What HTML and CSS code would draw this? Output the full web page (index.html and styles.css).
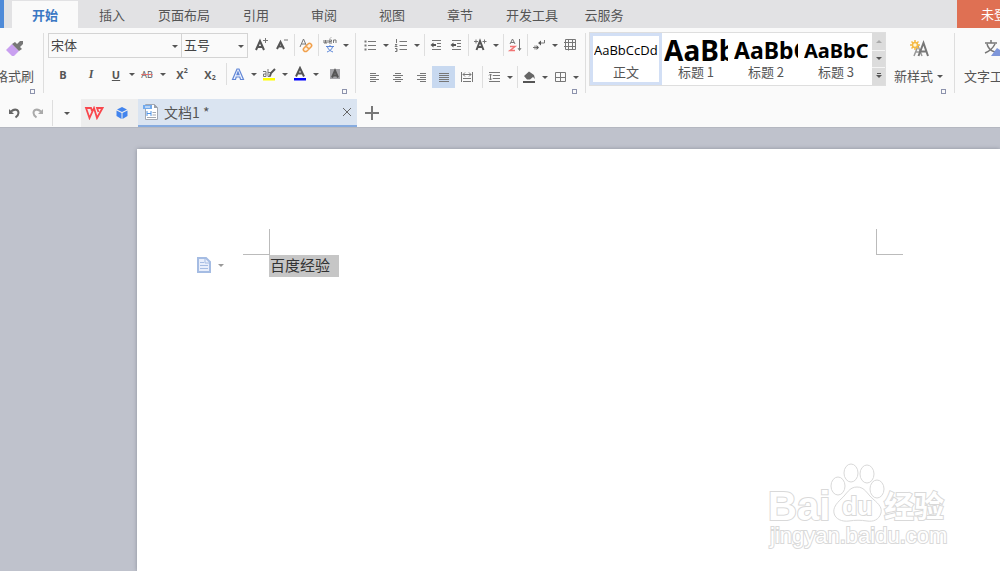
FILE: index.html
```html
<!DOCTYPE html>
<html lang="zh-CN">
<head>
<meta charset="utf-8">
<title>文档1</title>
<link rel="stylesheet" href="styles.css">
</head>
<body>
<div class="app">
  <header class="menubar">
    <span class="app-edge"></span>
    <nav class="menu">
      <button class="menu-tab active">开始</button>
      <button class="menu-tab">插入</button>
      <button class="menu-tab">页面布局</button>
      <button class="menu-tab">引用</button>
      <button class="menu-tab">审阅</button>
      <button class="menu-tab">视图</button>
      <button class="menu-tab">章节</button>
      <button class="menu-tab">开发工具</button>
      <button class="menu-tab">云服务</button>
    </nav>
    <button class="login">未登录</button>
  </header>

  <section class="ribbon">
    <div class="group painter">
      <button class="big-tool">
        <svg width="20" height="20" viewBox="0 0 20 20"><path d="M1 11 7 5l7 7-5 5H7z" fill="#c9a0f0"/><path d="m7 5 3-2 2 2 3-3 3 0 0 3-3 3 2 2-3 2z" fill="#777"/></svg>
        <span>格式刷</span>
      </button>
      <button class="launcher" aria-label="剪贴板选项"></button>
    </div>

    <div class="group font-group">
      <div class="row">
        <label class="combo combo-font"><select aria-label="字体"><option>宋体</option></select></label>
        <label class="combo combo-size"><select aria-label="字号"><option>五号</option></select></label>
        <button class="tool first-tool" aria-label="增大字号"><svg class="ico" viewBox="0 0 16 16"><path d="M3 13 7 4l4 9M4.500 10h5" class="bold"/><path d="M10 3.500h5M12.500 1v5" class="line"/></svg></button>
        <button class="tool gap-tool" aria-label="减小字号"><svg class="ico" viewBox="0 0 16 16"><path d="M3 12 6.500 5l3.500 7M4.500 9.500h4" class="bold"/><path d="M10 3h4" class="line"/></svg></button>
        <i class="sep"></i>
        <button class="tool" aria-label="清除格式"><svg class="ico" viewBox="0 0 16 16"><path d="M2 10 5.500 2 9 10M3.500 7h4" class="line"/><path d="m6 11 4-4a2 2 0 0 1 3 3l-4 4a2 2 0 0 1-3-3zM8 9l3 3" fill="#fff1df" stroke="#f0a04c" stroke-width="1.500"/></svg></button>
        <i class="sep"></i>
        <button class="tool" aria-label="拼音指南"><svg class="ico" viewBox="0 0 16 16"><path d="M2 3v3h3V3M3.500 3v3M7 4.500h2.500V3H7v3h3M11.500 6V3h2.500v3M8 1.500l1-1" class="line"/><path d="M4 9.500h8M8 8v1M5.500 10c1 3 3 4 5.500 5M10.500 10c-1 3-3 4-5.500 5" stroke="#5b86d8" fill="none"/></svg></button>
        <button class="caret" aria-label="更多拼音选项"></button>
      </div>
      <div class="row row-lower">
        <button class="tool w28 t-bold" aria-label="加粗">B</button>
        <button class="tool w28 t-italic" aria-label="倾斜">I</button>
        <button class="tool gap-tool t-under" aria-label="下划线">U</button>
        <button class="caret" aria-label="下划线样式"></button>
        <button class="tool t-strike" aria-label="删除线">AB</button>
        <button class="caret" aria-label="删除线样式"></button>
        <button class="tool w28 t-script" aria-label="上标">X<sup>2</sup></button>
        <button class="tool w28 t-script" aria-label="下标">X<sub>2</sub></button>
        <i class="sep"></i>
        <button class="tool" aria-label="文字效果"><svg class="ico" viewBox="0 0 16 16"><path d="M2.500 13.500 7 3h2l4.500 10.500h-3L9.800 11H6.200l-.700 2.500zM7 8.700h2L8 6z" fill="#eef3ff" stroke="#6287d6" stroke-width="1.200"/></svg></button>
        <button class="caret" aria-label="文字效果选项"></button>
        <button class="tool" aria-label="突出显示"><svg class="ico" viewBox="0 0 16 16"><path d="M2 5.500h3v5H2.500V8H5M7 3v7.500h2.500v-4H7" class="line"/><path d="m9 10 1-3 4-4" class="bold"/><path d="M2 12h12v2.500H2z" fill="#ff0"/></svg></button>
        <button class="caret" aria-label="突出显示颜色"></button>
        <button class="tool" aria-label="字体颜色"><svg class="ico" viewBox="0 0 16 16"><path d="M4 10.500 8 2l4 8.500M5.500 7.500h5" class="bold"/><path d="M2 12h12v2.500H2z" fill="#00f"/></svg></button>
        <button class="caret" aria-label="选择字体颜色"></button>
        <button class="tool w28" aria-label="字符底纹"><svg class="ico" viewBox="0 0 16 16"><path d="M3 3h10v10H3z" fill="#a4a4a8"/><path d="m5 11.500 3-7 3 7M6 9.500h4" class="bold"/></svg></button>
      </div>
      <button class="launcher" aria-label="字体设置"></button>
    </div>

    <div class="group para-group">
      <div class="row">
        <button class="tool" aria-label="项目符号"><svg class="ico" viewBox="0 0 16 16"><path d="M6 4.500h8M6 8.500h8M6 12.500h8" class="line"/><path d="M2.500 3.500h2v2h-2zM2.500 7.500h2v2h-2zM2.500 11.500h2v2h-2z" fill="#777"/></svg></button>
        <button class="caret" aria-label="项目符号样式"></button>
        <button class="tool" aria-label="编号"><svg class="ico" viewBox="0 0 16 16"><path d="M6.500 4.500H14M6.500 8.500H14M6.500 12.500H14M3.500 2v4M2 7.500h2l-2 2h2.500M2 11.500h2v3H2M3 13h1" class="line"/></svg></button>
        <button class="caret" aria-label="编号样式"></button>
        <i class="sep"></i>
        <button class="tool" aria-label="减少缩进"><svg class="ico" viewBox="0 0 16 16"><path d="M4 3.500h9M9 6.500h4M9 9.500h4M4 12.500h9" class="line"/><path d="M8 8H4" class="bold"/><path d="m2.500 8 3-2.500v5z" fill="#555"/></svg></button>
        <button class="tool" aria-label="增加缩进"><svg class="ico" viewBox="0 0 16 16"><path d="M4 3.500h9M9 6.500h4M9 9.500h4M4 12.500h9" class="line"/><path d="M5 8h3" class="bold"/><path d="m2.500 8 3-2.500v5z" fill="#555"/></svg></button>
        <i class="sep"></i>
        <button class="tool" aria-label="中文版式"><svg class="ico" viewBox="0 0 16 16"><path d="m4.500 13 3.500-9 3.500 9M6 10h4" class="bold"/><path d="M2 4.500h4M4 2.500v4M10.500 4.500h4M12.500 2.500v4" class="line"/></svg></button>
        <button class="caret" aria-label="中文版式选项"></button>
        <i class="sep"></i>
        <button class="tool" aria-label="排序"><svg class="ico" viewBox="0 0 16 16"><path d="m3 7 2.500-5L8 7M4 5.500h3M12.500 2v11M11 11l1.500 2.500L14 11" class="line"/><path d="M3 9.500h5l-5 4h5" fill="none" stroke="#f27474" stroke-width="1.500"/></svg></button>
        <i class="sep"></i>
        <button class="tool" aria-label="显示段落标记"><svg class="ico" viewBox="0 0 16 16"><path d="M13.500 3v3H9M7 10.500H2M4 8.500v4" class="line"/><path d="m7 6 3-2.500v5zM8 10.500 5.500 8v5z" fill="#555"/></svg></button>
        <button class="caret" aria-label="段落标记选项"></button>
        <button class="tool" aria-label="插入表格"><svg class="ico" viewBox="0 0 16 16"><path d="M3.500 2.500h10v10h-10zM2 5.500h11.500M2 9.500h11.500M6.500 2.500v11M10.500 2.500v10" class="line"/></svg></button>
      </div>
      <div class="row row-align">
        <button class="tool w23" aria-label="左对齐"><svg class="ico" viewBox="0 0 16 16"><path d="M3 4.500h6M3 6.500h9M3 8.500h6M3 10.500h9M3 12.500h6" class="line"/></svg></button>
        <button class="tool w23" aria-label="居中"><svg class="ico" viewBox="0 0 16 16"><path d="M5 4.500h6M3 6.500h10M5 8.500h6M3 10.500h10M5 12.500h6" class="line"/></svg></button>
        <button class="tool w23" aria-label="右对齐"><svg class="ico" viewBox="0 0 16 16"><path d="M7 4.500h6M4 6.500h9M7 8.500h6M4 10.500h9M7 12.500h6" class="line"/></svg></button>
        <button class="tool w23 pressed" aria-label="两端对齐" aria-pressed="true"><svg class="ico" viewBox="0 0 16 16"><path d="M3 4.500h10M3 6.500h10M3 8.500h10M3 10.500h10M3 12.500h10" class="line"/></svg></button>
        <button class="tool w23" aria-label="分散对齐"><svg class="ico" viewBox="0 0 16 16"><path d="M2.500 3v10M13.500 3v10M4 5.500h8M4 9.500h8M4 12.500h8M6 3.500l-2 2 2 2M10 3.500l2 2-2 2" class="line"/></svg></button>
        <i class="sep sep-align"></i>
        <button class="tool" aria-label="行距"><svg class="ico" viewBox="0 0 16 16"><path d="M3 3.500h11M7 6.500h7M7 9.500h7M3 12.500h11M4.500 5v6M3 6.500 4.500 5 6 6.500M3 9.500 4.500 11 6 9.500" class="line"/></svg></button>
        <button class="caret" aria-label="行距选项"></button>
        <i class="sep"></i>
        <button class="tool" aria-label="底纹"><svg class="ico" viewBox="0 0 16 16"><path d="m3 7 5-4.500L13 6l1 4-2-2-3 2.500H6z" fill="#666"/><path d="M2 12h12v2H2z" fill="#555"/></svg></button>
        <button class="caret" aria-label="底纹颜色"></button>
        <button class="tool" aria-label="边框"><svg class="ico" viewBox="0 0 16 16"><path d="M3.500 3.500h10v9h-10zM8.500 3.500v9M3.500 8.500h10" class="line"/></svg></button>
        <button class="caret" aria-label="边框样式"></button>
      </div>
      <button class="launcher" aria-label="段落设置"></button>
    </div>

    <div class="group style-group">
      <div class="gallery">
        <button class="style selected"><span class="sample s-body">AaBbCcDd</span><span>正文</span></button>
        <button class="style"><span class="sample s-h1">AaBb</span><span>标题 1</span></button>
        <button class="style"><span class="sample s-h2">AaBbC</span><span>标题 2</span></button>
        <button class="style"><span class="sample s-h3">AaBbC</span><span>标题 3</span></button>
        <div class="scroller">
          <button class="up" aria-label="向上"></button>
          <button class="down" aria-label="向下"></button>
          <button class="down more" aria-label="更多样式"></button>
        </div>
      </div>
      <button class="big-tool new-style">
        <svg width="20" height="20" viewBox="0 0 20 20"><path d="m5 17 4-10 4 10M6.500 13h5" fill="none" stroke="#999" stroke-width="1.500"/><path d="m9.500 17 5-13 4.500 13M11 12.500h6" fill="none" stroke="#777" stroke-width="2"/><circle cx="6" cy="6" r="2.500" fill="#fff8dc" stroke="#f5b942" stroke-width="1.500"/><path d="M6 1v2M6 9v2M1 6h2M9 6h2M2.500 2.500 4 4M8 8l1.500 1.500M9.500 2.500 8 4M4 8 2.500 9.500" stroke="#f5b942" stroke-width="1.500"/></svg>
        <span>新样式<b class="mini-caret"></b></span>
      </button>
      <button class="launcher" aria-label="样式设置"></button>
    </div>

    <div class="group text-tools">
      <button class="big-tool">
        <svg width="20" height="20" viewBox="0 0 20 20"><path d="M5 4h12M11 1v3M7 5c1 4 4 7 8 8M15 5c-2 4-5 7-10 9" fill="none" stroke="#777" stroke-width="1.500"/><path d="m11 17 6-8 3 2v6z" fill="#7e96da"/></svg>
        <span>文字工具</span>
      </button>
    </div>
  </section>

  <section class="docbar">
    <div class="quick">
      <button class="quick-btn" aria-label="撤销"><svg width="14" height="14" viewBox="0 0 14 14"><path d="M4 5.500C8 2 11.500 4 11.500 7c0 2-1 3-3 4.500" fill="none" stroke="#666" stroke-width="2"/><path d="M2 3v5h5z" fill="#666"/></svg></button>
      <button class="quick-btn" aria-label="恢复"><svg width="14" height="14" viewBox="0 0 14 14"><path d="M10 5.500C6 2 2.500 4 2.500 7c0 2 1 3 3 4.500" fill="none" stroke="#aaa" stroke-width="2"/><path d="M12 3v5H7z" fill="#aaa"/></svg></button>
      <i class="sep quick-sep"></i>
      <button class="quick-btn quick-more" aria-label="自定义快速访问工具栏"></button>
    </div>
    <div class="apps">
      <button class="app-btn" aria-label="WPS 首页"><svg width="20" height="14" viewBox="0 0 20 14"><path d="M8 5 7 2H2l3.500 10L10 2l3 10 5.500-10H13l1.500 4" fill="none" stroke="#f9474d" stroke-width="1.800"/></svg></button>
      <button class="app-btn" aria-label="稻壳"><svg width="14" height="14" viewBox="0 0 14 14"><path d="m7 1 5 2.500L7 6 2 3.500zM1.500 4.500l5 2.500v6l-5-3zM12.500 4.500 7.500 7v6l5-3z" fill="#4284ee"/></svg></button>
    </div>
    <div class="doc-tab">
      <svg width="16" height="18" viewBox="0 0 16 18"><path d="M2.500 1.500h9l3 3v12h-12z" fill="#fff" stroke="#a3a8b2"/><path d="M11 1v4h4z" fill="#9aa0aa"/><path d="M0 2h9v4H0z" fill="#72aaed"/><path d="M2 4h5" stroke="#fff"/><path d="M4 8v5M4 10.500h4M8 8v5" stroke="#4f92e4" fill="none"/><path d="M9.500 9.500H13M9.500 12H13M4 14.500h9" stroke="#a3a8b2"/></svg>
      <span class="doc-name">文档1 *</span>
      <button class="close" aria-label="关闭"><svg width="10" height="10" viewBox="0 0 10 10"><path d="m1 1 8 8M9 1 1 9" stroke="#666"/></svg></button>
    </div>
    <button class="add" aria-label="新建文档"><svg width="14" height="14" viewBox="0 0 14 14"><path d="M7 0v14M0 7h14" stroke="#777" stroke-width="2"/></svg></button>
  </section>

  <main class="canvas">
    <article class="page">
      <div class="margins"><i class="mark mark-left"></i><i class="mark mark-right"></i></div>
      <div class="line-row">
        <button class="para-btn" aria-label="段落布局"><svg width="14" height="16" viewBox="0 0 14 16"><path d="M1 1h8l4 4v10H1z" fill="#e8eefb" stroke="#a5bce3" stroke-width="2"/><path d="M8 1v5h5M3 8.500h8M3 11.500h8M3 5.500h4" stroke="#a5bce3" fill="none"/></svg><b class="mini-caret"></b></button>
        <p class="text"><span class="selection">百度经验</span></p>
      </div>
    </article>
    <svg class="watermark" width="184" height="90" viewBox="0 0 184 90">
      <g class="wm">
        <ellipse cx="72" cy="27" rx="7" ry="9"/><ellipse cx="85" cy="14" rx="7" ry="9"/><ellipse cx="101" cy="15" rx="7" ry="9"/><ellipse cx="111" cy="30" rx="7" ry="9"/>
        <path d="M91 28c8 0 10 7 16 12 7 6 9 9 8 14-2 7-8 9-14 8-6-1-12-1-18 0-7 1-14-2-15-8-1-5 2-9 7-14 6-5 8-12 16-12z"/>
        <text x="2" y="61" class="wm-logo">Bai</text><text x="76" y="56" class="wm-du">du</text><text x="118" y="58" class="wm-cn">经验</text>
        <text x="4" y="84" class="wm-url">jingyan.baidu.com</text>
      </g>
    </svg>
  </main>
</div>
</body>
</html>
```
FILE: styles.css
```css
* { box-sizing: border-box; }

body {
  margin: 0;
  font: 13px/18px "Noto Sans CJK SC", "Open Sans", sans-serif;
  color: #555;
  background: #bfc2cc;
}

button {
  margin: 0;
  padding: 0;
  border: 0;
  background: none;
  color: inherit;
  font: inherit;
  white-space: nowrap;
}

svg { display: block; flex: none; }

.app {
  display: flex;
  flex-direction: column;
  height: 100vh;
  overflow: hidden;
}

/* Menu bar */
.menubar {
  display: flex;
  flex: none;
  height: 28px;
  background: #e2e2e4;
}
.app-edge { width: 4px; background: #4e8ad8; }
.menu { display: flex; flex: 1; padding-left: 6px; }
.menu-tab { min-width: 68px; padding: 2px 12px 0; }
.menu-tab.active {
  min-width: 66px;
  margin: 1px 0 0 2px;
  padding-top: 1px;
  background: #fafafa;
  color: #3b78c4;
  font-weight: 700;
}
.login {
  width: 43px;
  padding-left: 24px;
  overflow: hidden;
  background: #df7053;
  color: #fff;
  text-align: left;
}

/* Ribbon */
.ribbon {
  display: flex;
  flex: none;
  height: 71px;
  overflow: hidden;
  background: #fafafa;
}
.group {
  position: relative;
  flex: none;
  padding-top: 5px;
}
.group + .group::before {
  content: "";
  position: absolute;
  left: 0;
  top: 5px;
  bottom: 6px;
  width: 1px;
  background: #dedede;
}
.launcher {
  position: absolute;
  right: 8px;
  bottom: 5px;
  width: 5px;
  height: 5px;
  border: 1px solid #8d93ad;
}
.row { display: flex; align-items: center; height: 24px; }
.row-lower { margin-top: 5px; padding-left: 1px; }
.row-align { margin-top: 8px; padding-left: 3px; }

.tool {
  display: flex;
  align-items: center;
  justify-content: center;
  flex: none;
  width: 20px;
  height: 22px;
}
.w23 { width: 23px; }
.w28 { width: 28px; }
.gap-tool { margin-left: 1px; }
.first-tool { margin-left: 3px; }
.pressed { background: #c8d9f0; }
.ico { width: 16px; height: 16px; }
.line { fill: none; stroke: #777; stroke-width: 1px; }
.bold { fill: none; stroke: #555; stroke-width: 2px; }
.sep {
  flex: none;
  width: 1px;
  height: 22px;
  margin: 0 1px 0 2px;
  background: #dedede;
}
.sep-align { margin-left: 4px; }
.caret { flex: none; width: 11px; height: 22px; }
.caret::before,
.quick-more::before,
.mini-caret,
.up::before,
.down::before,
.combo::after {
  content: "";
  display: block;
  width: 0;
  margin: 0 auto;
  border: 3px solid transparent;
  border-top-color: #555;
  border-bottom-width: 0;
}
.combo {
  position: relative;
  border: 1px solid #d4d4d4;
  background: #fafafa;
}
.combo::after { position: absolute; right: 3px; top: 11px; }
.combo-font { width: 134px; }
.combo-size { width: 67px; margin-left: -1px; }
.combo select {
  display: block;
  width: 100%;
  height: 23px;
  padding: 0 2px;
  border: 0;
  appearance: none;
  background: none;
  color: #444;
  font: inherit;
}
.t-bold { font: 700 11px "Open Sans", sans-serif; }
.t-italic { font: italic 700 12px "Liberation Serif", serif; }
.t-under { font: 700 11px "Open Sans", sans-serif; text-decoration: underline; }
.t-strike { font: 9px "Open Sans", sans-serif; text-decoration: line-through #e07070; }
.t-script { font: 700 11px "Open Sans", sans-serif; }
.t-script sup, .t-script sub { font-size: 7px; line-height: 7px; }
.t-script sup { align-self: flex-start; margin-top: 4px; }
.t-script sub { align-self: flex-end; margin-bottom: 4px; }

.painter { width: 43px; }
.painter .big-tool { margin-left: -5px; }
.font-group { width: 312px; padding-left: 5px; }
.para-group { width: 230px; padding-left: 5px; }
.style-group { display: flex; width: 369px; padding: 4px 0 0 4px; }
.text-tools { width: 68px; padding-left: 10px; }

.big-tool {
  display: flex;
  flex-direction: column;
  align-items: center;
  gap: 8px;
  padding-top: 6px;
}
.new-style { margin-left: 8px; padding-top: 7px; }
.new-style span { display: flex; align-items: center; gap: 4px; }

/* Style gallery */
.gallery {
  display: flex;
  height: 54px;
  border: 1px solid #dedede;
  background: #fff;
}
.style {
  display: flex;
  flex-direction: column;
  width: 70px;
  padding: 4px 4px 0 2px;
  line-height: 16px;
}
.style.selected {
  width: 72px;
  padding: 1px 1px 0;
  border: 3px solid #d2dff5;
}
.sample {
  align-self: stretch;
  height: 27px;
  overflow: hidden;
  color: #000;
  line-height: 27px;
  text-align: left;
}
.style > :last-child { align-self: center; }
.s-body { font-family: "Open Sans", sans-serif; font-size: 13px; }
.s-h1 { font-family: "Noto Sans", sans-serif; font-size: 28px; font-weight: 700; }
.s-h2 { font-family: "Noto Sans", sans-serif; font-size: 23px; font-weight: 700; }
.s-h3 { font-family: "Noto Sans", sans-serif; font-size: 20px; font-weight: 700; }
.scroller {
  display: grid;
  grid-template-rows: repeat(3, 1fr);
  gap: 1px;
  width: 13px;
  background: #f4f4f4;
}
.scroller button { background: #dcdcdc; }
.up::before { border-width: 0 3px 3px; border-bottom-color: #aaa; }
.more::before { box-shadow: 0 -3px 0 -1px #555; }

/* Document bar */
.docbar {
  display: flex;
  flex: none;
  height: 29px;
  border-bottom: 1px solid #b4b7c0;
  background: #fafafa;
}
.quick { display: flex; align-items: center; width: 81px; padding-left: 2px; }
.quick-btn { display: flex; align-items: center; justify-content: center; width: 24px; height: 24px; }
.quick-sep { height: 26px; }
.quick-more { width: 26px; }
.apps { display: flex; width: 57px; background: #eee; }
.app-btn { display: flex; align-items: center; justify-content: center; width: 30px; }
.app-btn:first-child { width: 26px; }
.doc-tab {
  display: flex;
  align-items: center;
  gap: 5px;
  width: 219px;
  padding: 0 5px;
  border-bottom: 2px solid #86abdf;
  background: #dae4f1;
}
.doc-name { flex: 1; font-size: 14px; }
.add { display: flex; align-items: center; padding-left: 8px; }

/* Document */
.canvas {
  position: relative;
  display: flex;
  flex: 1;
  padding: 21px 0 0 137px;
  overflow: hidden;
  background: #bfc2cc;
}
.page {
  flex: 1;
  padding-top: 80px;
  background: #fff;
  box-shadow: 0 0 4px #8c909b;
}
.margins {
  display: flex;
  justify-content: space-between;
  padding: 0 97px 0 106px;
}
.mark {
  width: 27px;
  height: 26px;
  border: 0 solid #bbb;
  border-bottom-width: 1px;
}
.mark-left { border-right-width: 1px; }
.mark-right { border-left-width: 1px; }
.line-row { display: flex; padding-left: 60px; }
.para-btn { display: flex; align-items: center; gap: 7px; width: 72px; height: 20px; }
.para-btn .mini-caret { margin: 0; border-top-color: #999; }
.text { margin: 0; font-size: 15px; line-height: 20px; color: #333; }
.selection { display: block; padding: 0 9px 2px 1px; background: #c6c6c6; }

.watermark { position: absolute; right: 50px; bottom: 22px; }
.wm { fill: #fff; stroke: #d9d9d9; stroke-width: 1px; }
.wm text { paint-order: stroke; stroke-width: 2px; }
.wm .wm-logo { font: 700 40px "Liberation Sans", sans-serif; }
.wm .wm-du { font: 700 25px "Liberation Sans", sans-serif; }
.wm .wm-cn { font: 700 30px "Noto Sans CJK SC", sans-serif; }
.wm .wm-url { font: 22px "Liberation Sans", sans-serif; }
```
